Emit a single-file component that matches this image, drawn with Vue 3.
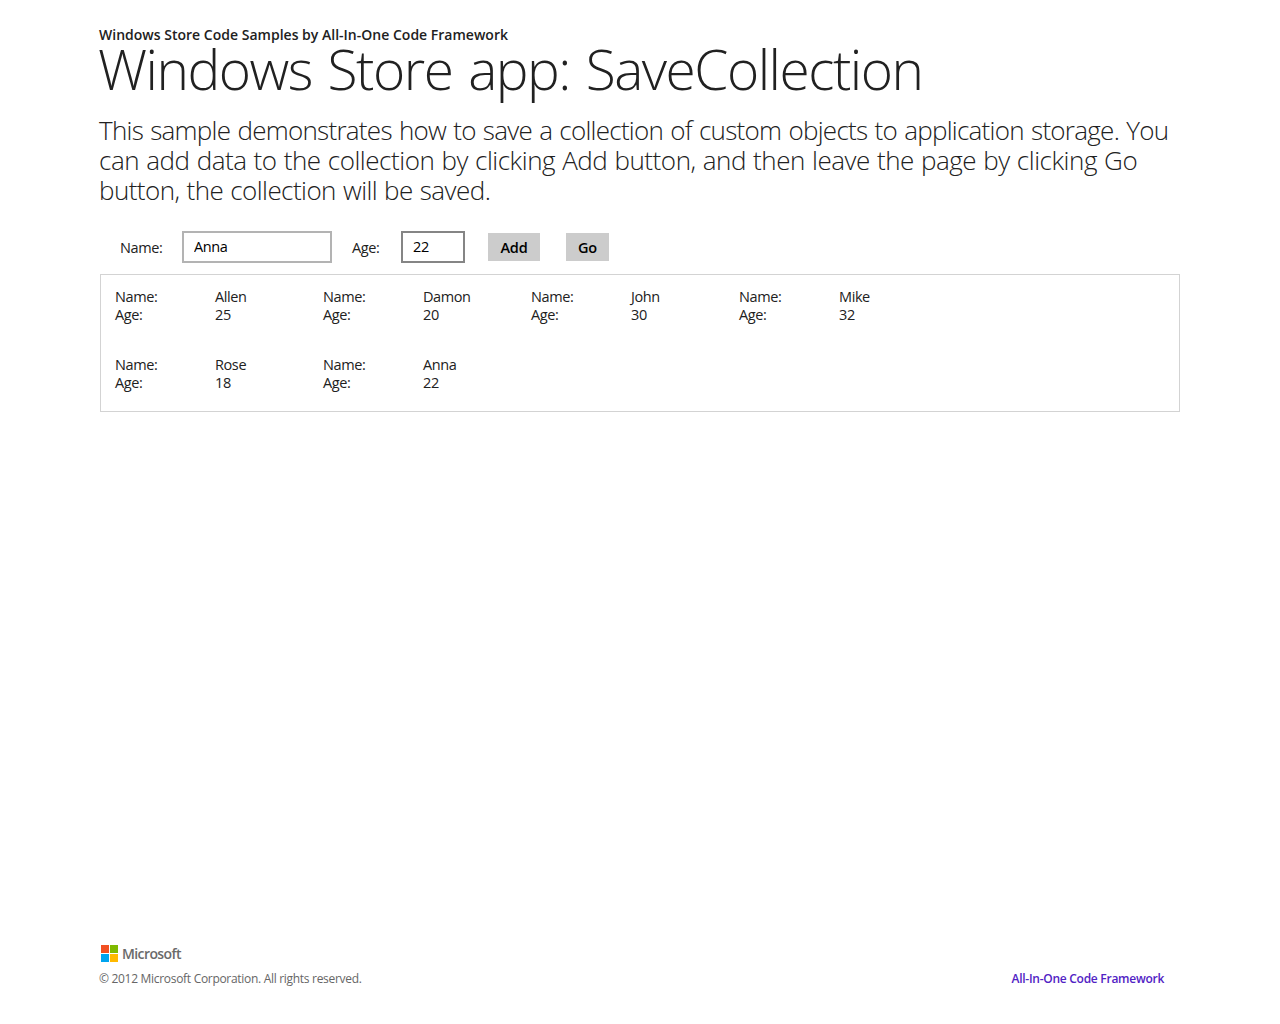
<script setup>
import { ref } from 'vue'

const name = ref('Anna')
const age = ref('22')

const people = ref([
  { name: 'Allen', age: 25 },
  { name: 'Damon', age: 20 },
  { name: 'John', age: 30 },
  { name: 'Mike', age: 32 },
  { name: 'Rose', age: 18 },
  { name: 'Anna', age: 22 }
])

function add() {
  people.value.push({ name: name.value, age: age.value })
}
</script>

<template>
  <div class="page">
    <header>
      <p class="eyebrow">Windows Store Code Samples by All-In-One Code Framework</p>
      <h1>Windows Store app: SaveCollection</h1>
      <div class="intro">
        <p class="l1">This sample demonstrates how to save a collection of custom objects to application storage. You</p>
        <p class="l2">can add data to the collection by clicking Add button, and then leave the page by clicking Go</p>
        <p class="l3">button, the collection will be saved.</p>
      </div>
    </header>

    <form class="entry" @submit.prevent="add">
      <label class="name-label" for="name">Name:</label>
      <input id="name" v-model="name" class="name-box" type="text" />
      <label class="age-label" for="age">Age:</label>
      <input id="age" v-model="age" class="age-box" type="text" />
      <button class="add" type="submit">Add</button>
      <button class="go" type="button">Go</button>
    </form>

    <main class="list">
      <dl v-for="(p, i) in people" :key="i" class="person">
        <dt>Name:</dt>
        <dd>{{ p.name }}</dd>
        <dt>Age:</dt>
        <dd>{{ p.age }}</dd>
      </dl>
    </main>

    <footer>
      <div>
        <div class="brand">
          <svg width="17" height="17" viewBox="0 0 17 17">
            <rect width="8" height="8" fill="#f25022" />
            <rect x="9" width="8" height="8" fill="#7fba00" />
            <rect y="9" width="8" height="8" fill="#00a4ef" />
            <rect x="9" y="9" width="8" height="8" fill="#ffb900" />
          </svg>
          <span>Microsoft</span>
        </div>
        <p class="copyright">© 2012 Microsoft Corporation. All rights reserved.</p>
      </div>
      <a class="link">All-In-One Code Framework</a>
    </footer>
  </div>
</template>

<style>
body {
  margin: 0;
  background: #fff;
}
</style>

<style scoped>
.page {
  box-sizing: border-box;
  width: 1280px;
  height: 1024px;
  padding: 25px 100px 36px;
  display: flex;
  flex-direction: column;
  font-family: "Open Sans", "Noto Sans", sans-serif;
  font-size: 14.5px;
  color: #212121;
}
p, h1, dl, dd {
  margin: 0;
}
header {
  margin-left: -1px;
  width: 1090px;
  white-space: nowrap;
}
.eyebrow {
  font-size: 14px;
  font-weight: 600;
  line-height: 20px;
  letter-spacing: 0.01px;
}
h1 {
  font-size: 55px;
  font-weight: 300;
  line-height: 60px;
  margin-top: -6px;
  margin-left: -1px;
  letter-spacing: -1.5px;
  word-spacing: 3px;
}
.intro {
  margin-top: 16px;
  font-size: 26px;
  font-weight: 300;
  line-height: 30px;
}
.l1 {
  letter-spacing: -0.73px;
  word-spacing: 1.1px;
}
.l2 {
  letter-spacing: -0.46px;
  word-spacing: 0.8px;
}
.l3 {
  letter-spacing: -0.55px;
  word-spacing: 0.8px;
}
.entry {
  display: flex;
  align-items: center;
  height: 32px;
  margin-top: 26px;
  padding-left: 20px;
  letter-spacing: -0.4px;
}
.name-label {
  width: 62px;
}
.age-label {
  width: 49px;
  margin-left: 20px;
}
input {
  box-sizing: border-box;
  height: 32px;
  padding: 0 10px 1px;
  border: 2px solid #b3b3b3;
  outline: none;
  font: inherit;
  letter-spacing: inherit;
  color: #000;
}
.name-box {
  width: 150px;
}
.age-box {
  width: 64px;
  border-color: #858585;
}
button {
  height: 28px;
  padding: 0;
  border: 0;
  background: #ccc;
  font: inherit;
  font-weight: 600;
  letter-spacing: -0.2px;
  color: #000;
}
.add {
  width: 52px;
  margin-left: 23px;
}
.go {
  width: 43px;
  margin-left: 26px;
}
.list {
  box-sizing: border-box;
  height: 138px;
  margin-top: 11px;
  padding: 13px 14px;
  border: 1px solid #d3d3d3;
  display: grid;
  grid-template-columns: repeat(4, 208px);
  grid-auto-rows: 68px;
  letter-spacing: -0.4px;
}
.person {
  display: grid;
  grid-template-columns: 100px 100px;
  grid-auto-rows: 18px;
  line-height: 18px;
}
footer {
  margin-top: auto;
  display: flex;
  justify-content: space-between;
  align-items: flex-end;
  font-size: 12px;
  line-height: 18px;
}
.brand {
  display: flex;
  align-items: center;
  gap: 4px;
  margin: 0 0 8px 1px;
  font-size: 14px;
  font-weight: 600;
  color: #6a6a6a;
  letter-spacing: -0.6px;
}
.brand span {
  padding-top: 1px;
  margin-bottom: -1px;
}
.copyright {
  margin-left: -1px;
  color: #666;
  letter-spacing: -0.3px;
}
.link {
  margin-right: 16px;
  font-weight: 600;
  color: #5122c4;
  letter-spacing: -0.27px;
}
</style>
